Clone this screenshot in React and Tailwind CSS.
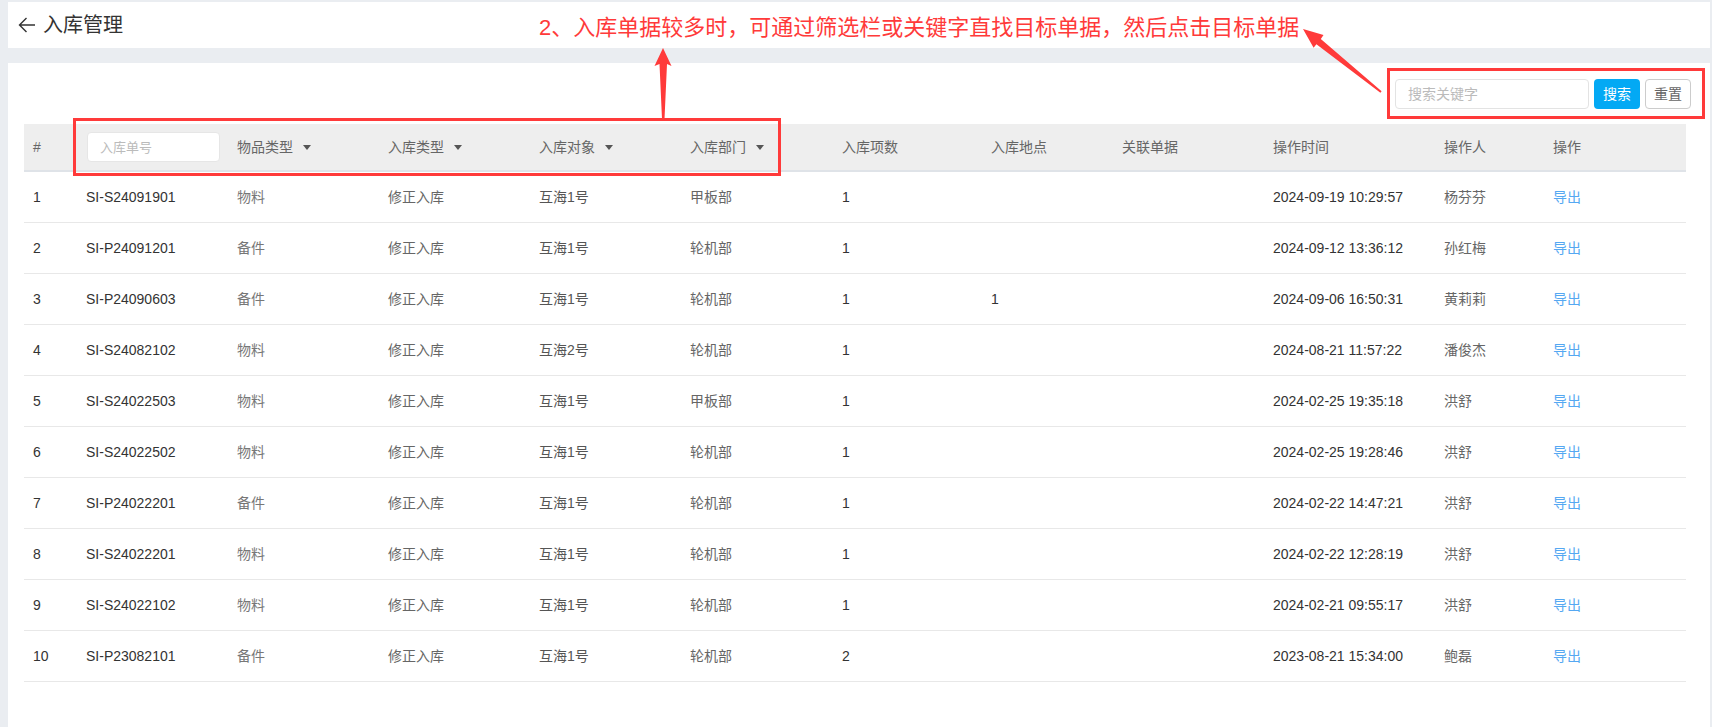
import { useState } from 'react'

const rows = [
  { no: 'SI-S24091901', kind: '物料', type: '修正入库', target: '互海1号', dept: '甲板部', count: '1', place: '', ref: '', time: '2024-09-19 10:29:57', user: '杨芬芬' },
  { no: 'SI-P24091201', kind: '备件', type: '修正入库', target: '互海1号', dept: '轮机部', count: '1', place: '', ref: '', time: '2024-09-12 13:36:12', user: '孙红梅' },
  { no: 'SI-P24090603', kind: '备件', type: '修正入库', target: '互海1号', dept: '轮机部', count: '1', place: '1', ref: '', time: '2024-09-06 16:50:31', user: '黄莉莉' },
  { no: 'SI-S24082102', kind: '物料', type: '修正入库', target: '互海2号', dept: '轮机部', count: '1', place: '', ref: '', time: '2024-08-21 11:57:22', user: '潘俊杰' },
  { no: 'SI-S24022503', kind: '物料', type: '修正入库', target: '互海1号', dept: '甲板部', count: '1', place: '', ref: '', time: '2024-02-25 19:35:18', user: '洪舒' },
  { no: 'SI-S24022502', kind: '物料', type: '修正入库', target: '互海1号', dept: '轮机部', count: '1', place: '', ref: '', time: '2024-02-25 19:28:46', user: '洪舒' },
  { no: 'SI-P24022201', kind: '备件', type: '修正入库', target: '互海1号', dept: '轮机部', count: '1', place: '', ref: '', time: '2024-02-22 14:47:21', user: '洪舒' },
  { no: 'SI-S24022201', kind: '物料', type: '修正入库', target: '互海1号', dept: '轮机部', count: '1', place: '', ref: '', time: '2024-02-22 12:28:19', user: '洪舒' },
  { no: 'SI-S24022102', kind: '物料', type: '修正入库', target: '互海1号', dept: '轮机部', count: '1', place: '', ref: '', time: '2024-02-21 09:55:17', user: '洪舒' },
  { no: 'SI-P23082101', kind: '备件', type: '修正入库', target: '互海1号', dept: '轮机部', count: '2', place: '', ref: '', time: '2023-08-21 15:34:00', user: '鲍磊' },
]

const cols = 'grid grid-cols-[53px_151px_151px_151px_151px_152px_149px_131px_151px_171px_109px_1fr]'

function Caret() {
  return (
    <svg width="8" height="5" viewBox="0 0 8 5" className="ml-[10px]">
      <path d="M0 0H8L4 5Z" fill="#555" />
    </svg>
  )
}

function FilterHead({ label }) {
  return (
    <div className="flex items-center pl-[9px] text-[#666]">
      <span>{label}</span>
      <Caret />
    </div>
  )
}

function Annotations() {
  return (
    <div className="pointer-events-none absolute inset-0">
      <div className="absolute left-[539px] top-[13px] whitespace-nowrap text-[22px] leading-[30px] text-[#ff3a3a]">
        2、入库单据较多时，可通过筛选栏或关键字直找目标单据，然后点击目标单据
      </div>
      <div className="absolute left-[73px] top-[118px] h-[58px] w-[708px] border-[3px] border-[#ff3a3a]" />
      <div className="absolute left-[1387px] top-[68px] h-[51px] w-[318px] border-[3px] border-[#ff3a3a]" />
      <svg className="absolute left-0 top-0" width="1712" height="130">
        <polygon points="663,48 671.5,66 667,64 664.5,119 662,119 659.5,64 654.5,66" fill="#ff3a3a" />
        <polygon points="1303,29 1323.5,35 1320.8,38.9 1381.6,91.2 1380.4,92.8 1316.4,44.3 1313.6,47.8" fill="#ff3a3a" />
      </svg>
    </div>
  )
}

export default function App() {
  const [keyword, setKeyword] = useState('')
  const [billNo, setBillNo] = useState('')

  return (
    <div
      className="relative min-h-[727px] bg-[#eaedf1] pl-[8px] pr-[2px] pt-[2px] text-[14px]"
      style={{ fontFamily: '"Liberation Sans", "Noto Sans CJK SC", sans-serif' }}
    >
      <div className="flex h-[46px] items-center bg-white pl-[10px]">
        <svg width="18" height="16" viewBox="0 0 18 16" className="mr-[7px]">
          <path d="M17 8H1.5M8.5 1L1.5 8L8.5 15" fill="none" stroke="#333" strokeWidth="1.4" />
        </svg>
        <span className="text-[20px] text-[#333]">入库管理</span>
      </div>

      <div className="mt-[15px] min-h-[664px] bg-white px-[16px] pt-[16px]">
        <div className="flex justify-end pr-[3px]">
          <input
            value={keyword}
            onChange={(e) => setKeyword(e.target.value)}
            placeholder="搜索关键字"
            className="h-[30px] w-[194px] rounded-[4px] border border-[#e3e3e3] px-[12px] text-[14px] text-[#333] outline-none placeholder:text-[#bbb]"
          />
          <button className="ml-[5px] h-[30px] w-[46px] rounded-[4px] bg-[#03a9f4] text-[14px] text-white">搜索</button>
          <button className="ml-[5px] h-[30px] w-[46px] rounded-[4px] border border-[#ccc] text-[14px] text-[#666]">重置</button>
        </div>

        <div className="mr-[8px] mt-[15px]">
          <div className={`${cols} h-[48px] items-center border-b-2 border-[#dfe3e8] bg-[#eeeeee] text-[#666]`}>
            <div className="pl-[9px]">#</div>
            <div className="pl-[10px] pr-[8px]">
              <input
                value={billNo}
                onChange={(e) => setBillNo(e.target.value)}
                placeholder="入库单号"
                className="h-[30px] w-[133px] rounded-[4px] border border-[#e6e6e6] bg-white px-[12px] text-[13px] text-[#333] outline-none placeholder:text-[#bbb]"
              />
            </div>
            <FilterHead label="物品类型" />
            <FilterHead label="入库类型" />
            <FilterHead label="入库对象" />
            <FilterHead label="入库部门" />
            <div className="pl-[9px]">入库项数</div>
            <div className="pl-[9px]">入库地点</div>
            <div className="pl-[9px]">关联单据</div>
            <div className="pl-[9px]">操作时间</div>
            <div className="pl-[9px]">操作人</div>
            <div className="pl-[9px]">操作</div>
          </div>

          {rows.map((row, index) => (
            <div key={row.no} className={`${cols} h-[51px] items-center border-b border-[#e8e8e8]`}>
              <div className="pl-[9px] text-[#333]">{index + 1}</div>
              <div className="pl-[9px] text-[#333]">{row.no}</div>
              <div className="pl-[9px] text-[#777]">{row.kind}</div>
              <div className="pl-[9px] text-[#666]">{row.type}</div>
              <div className="pl-[9px] text-[#555]">{row.target}</div>
              <div className="pl-[9px] text-[#666]">{row.dept}</div>
              <div className="pl-[9px] text-[#333]">{row.count}</div>
              <div className="pl-[9px] text-[#333]">{row.place}</div>
              <div className="pl-[9px] text-[#333]">{row.ref}</div>
              <div className="pl-[9px] text-[#333]">{row.time}</div>
              <div className="pl-[9px] text-[#666]">{row.user}</div>
              <div className="pl-[9px]">
                <a className="cursor-pointer text-[#55a8f2]">导出</a>
              </div>
            </div>
          ))}
        </div>
      </div>

      <Annotations />
    </div>
  )
}
